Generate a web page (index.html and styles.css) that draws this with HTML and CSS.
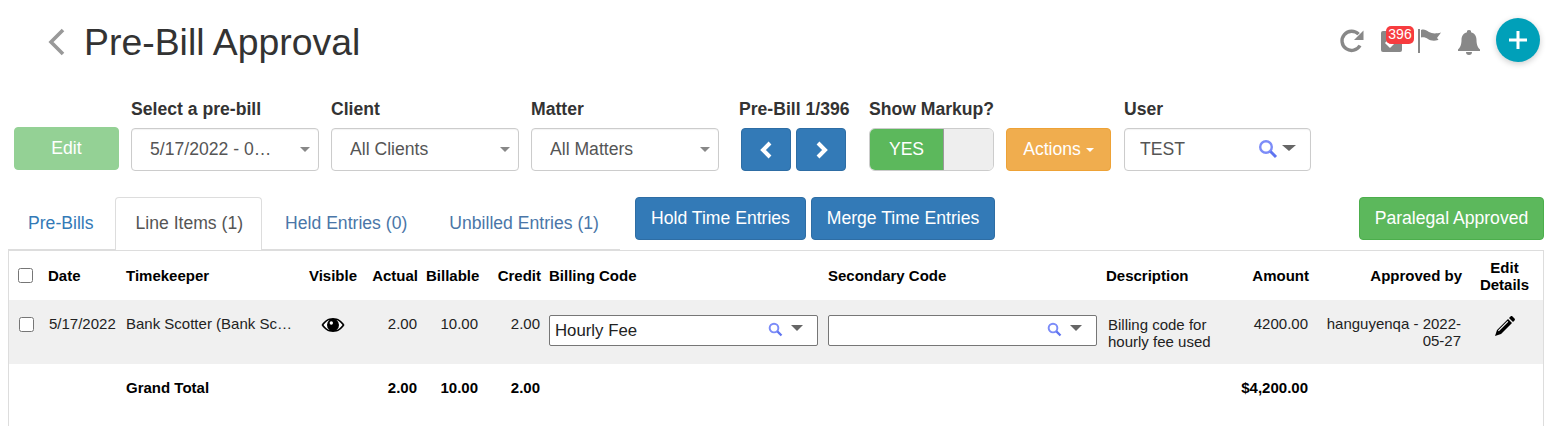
FILE: index.html
```html
<!DOCTYPE html>
<html lang="en">
<head>
<meta charset="utf-8">
<title>Pre-Bill Approval</title>
<link rel="stylesheet" href="styles.css">
</head>
<body>
<header class="page-head">
  <div class="title-wrap">
    <svg class="back" width="20" height="28" viewBox="0 0 20 28"><path d="M17 2 5 14l12 12" fill="none" stroke="#999" stroke-width="3.6"/></svg>
    <h1>Pre-Bill Approval</h1>
  </div>
  <div class="head-icons">
    <svg class="ic-refresh" width="26" height="26" viewBox="0 0 26 26"><path d="M21 17.5A9.6 9.6 0 1 1 19.6 6.2" fill="none" stroke="#888" stroke-width="3.400"/><path d="M24.5 2.5v9.5H15z" fill="#888"/></svg>
    <span class="task">
      <svg width="24" height="24" viewBox="0 0 24 24"><rect x="1" y="2" width="21" height="21" rx="2" fill="#888"/><path d="m6 13 4 4 7-7" fill="none" stroke="#fff" stroke-width="3"/></svg>
      <span class="badge">396</span>
    </span>
    <svg class="ic-flag" width="26" height="26" viewBox="0 0 26 26"><path d="M1 1h2v24H1z" fill="#888"/><path d="M4 2c3-1 5 0 8 2 3 1.500 6 2 12 .5-2 3-3.500 4.500-4 5.500 1 1 2 1.500 1 2-4 1.500-8 .5-10-1-2-1.200-4-2-7-1.500z" fill="#888"/></svg>
    <svg class="ic-bell" width="26" height="26" viewBox="0 0 26 26"><path d="M13 1a2 2 0 0 0-2 2.300C7.500 4.200 5.500 7 5.500 11c0 5-1.500 7.500-3.500 9.500V22h22v-1.500c-2-2-3.500-4.500-3.500-9.500 0-4-2-6.800-5.500-7.700A2 2 0 0 0 13 1zM10 23a3 3 0 0 0 6 0z" fill="#888"/></svg>
    <button class="fab" type="button" aria-label="Add"><svg width="20" height="20" viewBox="0 0 20 20"><path d="M10 1v18M1 10h18" stroke="#fff" stroke-width="3" fill="none"/></svg></button>
  </div>
</header>

<section class="toolbar">
  <button class="btn btn-edit" type="button">Edit</button>
  <div class="field">
    <label>Select a pre-bill</label>
    <div class="select"><span class="sel-text">5/17/2022 - 0…</span><i class="caret caret-light"></i></div>
  </div>
  <div class="field">
    <label>Client</label>
    <div class="select"><span class="sel-text">All Clients</span><i class="caret caret-light"></i></div>
  </div>
  <div class="field">
    <label>Matter</label>
    <div class="select"><span class="sel-text">All Matters</span><i class="caret caret-light"></i></div>
  </div>
  <div class="field field-nav">
    <label>Pre-Bill 1/396</label>
    <div class="nav-btns">
      <button class="btn btn-blue btn-nav" type="button" aria-label="Previous"><svg width="14" height="18" viewBox="0 0 14 18"><path d="M11 2 4 9l7 7" fill="none" stroke="#fff" stroke-width="4"/></svg></button>
      <button class="btn btn-blue btn-nav" type="button" aria-label="Next"><svg width="14" height="18" viewBox="0 0 14 18"><path d="m4 2 7 7-7 7" fill="none" stroke="#fff" stroke-width="4"/></svg></button>
    </div>
  </div>
  <div class="field field-toggle">
    <label>Show Markup?</label>
    <div class="toggle"><span class="toggle-on">YES</span><span class="toggle-off"></span></div>
  </div>
  <button class="btn btn-orange" type="button">Actions <i class="caret caret-white"></i></button>
  <div class="field field-user">
    <label>User</label>
    <div class="select user-select">
      <span class="sel-text">TEST</span>
      <svg class="search" width="20" height="20" viewBox="0 0 20 20"><circle cx="8" cy="8" r="5.800" fill="none" stroke="#7c8cf8" stroke-width="2.400"/><path d="m12.500 12.500 5.500 5.500" stroke="#5f74f0" stroke-width="3"/></svg>
      <i class="caret caret-dark"></i>
    </div>
  </div>
</section>

<section class="tab-row">
  <ul class="tabs">
    <li><a>Pre-Bills</a></li>
    <li class="active"><a>Line Items (1)</a></li>
    <li><a class="muted">Held Entries (0)</a></li>
    <li><a class="muted">Unbilled Entries (1)</a></li>
  </ul>
  <div class="tab-actions">
    <button class="btn btn-blue btn-hold" type="button">Hold Time Entries</button>
    <button class="btn btn-blue btn-merge" type="button">Merge Time Entries</button>
  </div>
  <button class="btn btn-green" type="button">Paralegal Approved</button>
</section>

<section class="grid-box">
  <table class="grid">
    <colgroup>
      <col class="c-check"><col class="c-date"><col class="c-tk"><col class="c-vis"><col class="c-act"><col class="c-bill"><col class="c-cred"><col class="c-code"><col class="c-sec"><col class="c-desc"><col class="c-amt"><col class="c-appr"><col class="c-edit">
    </colgroup>
    <thead>
      <tr>
        <th class="check-h"><input type="checkbox"></th>
        <th>Date</th>
        <th>Timekeeper</th>
        <th class="ctr">Visible</th>
        <th class="num">Actual</th>
        <th class="num">Billable</th>
        <th class="num">Credit</th>
        <th>Billing Code</th>
        <th>Secondary Code</th>
        <th>Description</th>
        <th class="num">Amount</th>
        <th class="num">Approved by</th>
        <th class="ctr">Edit<br>Details</th>
      </tr>
    </thead>
    <tbody>
      <tr class="row">
        <td class="check-d"><input type="checkbox"></td>
        <td class="date">5/17/2022</td>
        <td class="nowrap">Bank Scotter (Bank Sc…</td>
        <td class="ctr"><svg class="eye" width="24" height="16" viewBox="0 0 24 16"><path d="M12 1C7 1 3 3.800 .5 8 3 12.200 7 15 12 15s9-2.800 11.500-7C21 3.800 17 1 12 1z" fill="#000"/><path d="M2.500 8C4.800 4.800 7 3.400 8.500 2.900A6 6 0 0 0 6 8a6 6 0 0 0 2.500 5.100C7 12.600 4.800 11.200 2.500 8zM21.500 8c-2.300 3.200-4.500 4.600-6 5.100A6 6 0 0 0 18 8a6 6 0 0 0-2.500-5.100c1.500.5 3.700 1.900 6 5.100z" fill="#fff"/><circle cx="12" cy="8" r="4.300" fill="#000"/><circle cx="10.300" cy="6" r="1.700" fill="#fff"/></svg></td>
        <td class="num val">2.00</td>
        <td class="num val">10.00</td>
        <td class="num val">2.00</td>
        <td><div class="code-input"><span>Hourly Fee</span><svg class="search" width="15" height="15" viewBox="0 0 20 20"><circle cx="8" cy="8" r="5.800" fill="none" stroke="#7c8cf8" stroke-width="2.600"/><path d="m12.500 12.500 5.500 5.500" stroke="#5f74f0" stroke-width="3"/></svg><i class="caret caret-dark"></i></div></td>
        <td><div class="code-input"><span></span><svg class="search" width="15" height="15" viewBox="0 0 20 20"><circle cx="8" cy="8" r="5.800" fill="none" stroke="#7c8cf8" stroke-width="2.600"/><path d="m12.500 12.500 5.500 5.500" stroke="#5f74f0" stroke-width="3"/></svg><i class="caret caret-dark"></i></div></td>
        <td class="desc">Billing code for hourly fee used</td>
        <td class="num val">4200.00</td>
        <td class="num val appr">hanguyenqa - 2022-05-27</td>
        <td class="ctr"><svg class="pencil" width="22" height="22" viewBox="0 0 22 22"><path d="M16.500 1.500c.6-.6 1.400-.6 2 0l2 2c.6.600.6 1.400 0 2L19 7l-4-4zM14 4l4 4L7 19l-6 2 2-6z" fill="#000"/><path d="m4 15.500 9.500-9.500.8.800L4.800 16.300z" fill="#fff"/></svg></td>
      </tr>
      <tr class="total">
        <td></td>
        <td></td>
        <td>Grand Total</td>
        <td></td>
        <td class="num val">2.00</td>
        <td class="num val">10.00</td>
        <td class="num val">2.00</td>
        <td></td>
        <td></td>
        <td></td>
        <td class="num val">$4,200.00</td>
        <td></td>
        <td></td>
      </tr>
    </tbody>
  </table>
</section>
</body>
</html>
```

FILE: styles.css
```css
* { box-sizing: border-box; }
html, body { margin: 0; padding: 0; }
body {
  width: 1560px;
  height: 426px;
  overflow: hidden;
  background: #fff;
  color: #333;
  font-family: "Liberation Sans", Arial, sans-serif;
  font-size: 17.6px;
}

/* header */
.page-head {
  height: 85px;
  display: flex;
  justify-content: space-between;
  padding: 18px 20px 0 46px;
}
.title-wrap { display: flex; align-items: center; height: 48px; align-self: flex-start; }
.back { margin-right: 18px; }
h1 { margin: 0; font-size: 37.4px; font-weight: 400; line-height: 48px; color: #333; }
.head-icons { display: flex; align-items: flex-start; height: 44px; }
.ic-refresh { margin-top: 10px; }
.task { position: relative; margin: 11px 0 0 15px; width: 24px; height: 24px; }
.task svg { display: block; }
.badge {
  position: absolute;
  left: 6px;
  top: -3px;
  width: 28px;
  height: 18px;
  border-radius: 5px;
  background: #f73c3f;
  color: #fff;
  font-size: 14px;
  line-height: 17px;
  text-align: center;
}
.ic-flag { margin: 10px 0 0 13px; }
.ic-bell { margin: 11px 0 0 13px; }
.fab {
  width: 44px;
  height: 44px;
  margin-left: 14px;
  border: 0;
  border-radius: 50%;
  background: #00a0b9;
  box-shadow: 0 2px 6px rgba(0,0,0,.2);
  display: flex;
  align-items: center;
  justify-content: center;
  padding: 0;
}

/* toolbar */
.toolbar {
  display: flex;
  align-items: flex-end;
  padding-left: 14px;
  height: 86px;
}
.field { display: flex; flex-direction: column; width: 188px; margin-left: 12px; }
.field label { font-weight: 700; font-size: 17.6px; line-height: 20px; margin-bottom: 9px; color: #333; white-space: nowrap; }
.field-nav { width: 105px; margin-left: 22px; }
.field-nav label { margin-left: -2px; }
.field-toggle { width: 125px; margin-left: 23px; }
.field-user { width: 187px; margin-left: 13px; }
.select {
  height: 43px;
  border: 1px solid #ccc;
  border-radius: 4px;
  background: #fff;
  color: #555;
  padding: 0 8px 0 18px;
  display: flex;
  align-items: center;
  line-height: 41px;
  box-shadow: inset 0 1px 1px rgba(0,0,0,.05);
}
.sel-text { flex: 1; white-space: nowrap; overflow: hidden; }
.caret { display: inline-block; width: 0; height: 0; border-style: solid; border-color: transparent; border-width: 5px 5px 0; }
.caret-light { border-top-color: #888; }
.caret-dark { border-top-color: #666; border-width: 6px 7px 0; }
.caret-white { border-top-color: #fff; border-width: 4px 4px 0; vertical-align: middle; }
.user-select { padding: 0 14px 0 15px; }
.user-select .search { margin-right: 4px; margin-top: -1px; }
.user-select .caret { margin-top: -4px; }

.btn {
  height: 43px;
  border: 1px solid transparent;
  border-radius: 4px;
  color: #fff;
  font-family: inherit;
  font-size: 17.6px;
  padding: 0;
  white-space: nowrap;
}
.btn-edit { width: 105px; background: #94d195; border-color: #94d195; margin-bottom: 1px; }
.btn-blue { background: #337ab7; border-color: #2e6da4; }
.btn-nav { width: 50px; display: flex; align-items: center; justify-content: center; }
.nav-btns { display: flex; gap: 5px; }
.btn-orange { width: 105px; background: #f0ad4e; border-color: #eea236; margin-left: 12px; }
.btn-green { width: 185px; background: #5cb85c; border-color: #4cae4c; margin-left: auto; }

.toggle {
  height: 43px;
  border: 1px solid #ccc;
  border-radius: 6px;
  display: flex;
  overflow: hidden;
}
.toggle-on {
  width: 74px;
  background: #5cb85c;
  color: #fff;
  text-align: center;
  line-height: 41px;
  border-right: 1px solid #999;
}
.toggle-off { flex: 1; background: #eee; }

/* tabs */
.tab-row {
  display: flex;
  align-items: flex-start;
  height: 53px;
  margin-top: 26px;
  padding: 0 16px 0 8px;
}
.tabs {
  list-style: none;
  margin: 0;
  padding: 0;
  display: flex;
  width: 612px;
  height: 53px;
  border-bottom: 1px solid #ddd;
}
.tabs li { margin-right: 2px; height: 53px; }
.tabs a {
  display: block;
  height: 53px;
  padding: 15px 20px 0;
  line-height: 20px;
  color: #337ab7;
  border-top: 1px solid transparent;
  border-radius: 4px 4px 0 0;
  white-space: nowrap;
}
.tabs a.muted { color: #4a76a8; }
.tabs li.active { margin-left: -1px; margin-right: 3px; }
.tabs .active a { color: #555; background: #fff; border: 1px solid #ddd; border-bottom: 0; padding: 15px 18px 0 20px; }
.tab-actions { display: flex; gap: 5px; margin-left: 15px; }
.btn-hold { width: 171px; }
.btn-merge { width: 184px; }

/* grid */
.grid-box {
  margin: 0 16px 0 8px;
  height: 177px;
  border: 1px solid #ddd;
  border-bottom: 0;
}
.grid { width: 1534px; table-layout: fixed; border-collapse: collapse; font-size: 15px; color: #222; }
.c-check { width: 35px; }
.c-date { width: 78px; }
.c-tk { width: 178px; }
.c-vis { width: 66px; }
.c-act { width: 56px; }
.c-bill { width: 61px; }
.c-cred { width: 62px; }
.c-code { width: 279px; }
.c-sec { width: 278px; }
.c-desc { width: 124px; }
.c-amt { width: 87px; }
.c-appr { width: 153px; }
.c-edit { width: 77px; }
.grid th {
  height: 49px;
  padding: 0 4px;
  font-size: 15px;
  line-height: 17px;
  font-weight: 700;
  text-align: left;
  vertical-align: middle;
  white-space: nowrap;
  color: #000;
}
.grid .num { text-align: right; }
.grid .ctr { text-align: center; }
.grid td { padding: 15px 4px 0; vertical-align: top; line-height: 17px; }
.grid td.val { padding-right: 5px; }
.grid td.date { padding-left: 5px; white-space: nowrap; }
.grid td.nowrap { white-space: nowrap; }
.row { background: #f0f0f0; height: 64px; }
.total { height: 48px; }
.total td { font-weight: 700; color: #000; }
.grid .check-h { padding: 0 0 0 9px; }
.grid .check-d { padding: 17px 0 0 10px; }
input[type=checkbox] { width: 15px; height: 15px; margin: 0; display: block; }
.eye { display: block; margin: 2px auto 0; }
.code-input {
  width: 269px;
  height: 31px;
  border: 1px solid #767676;
  border-radius: 2px;
  background: #fff;
  display: flex;
  align-items: center;
  padding: 0 14px 0 5px;
  font-size: 16.8px;
  color: #222;
}
.code-input span { flex: 1; }
.code-input .search { margin: -2px 8px 0 0; }
.code-input .caret { margin-top: -5px; border-width: 6px 6px 0; }
.grid td.desc { padding: 16px 4px 0 6px; }
.grid td.appr { padding-left: 10px; }
.pencil { display: block; margin: 0 auto; }
```
